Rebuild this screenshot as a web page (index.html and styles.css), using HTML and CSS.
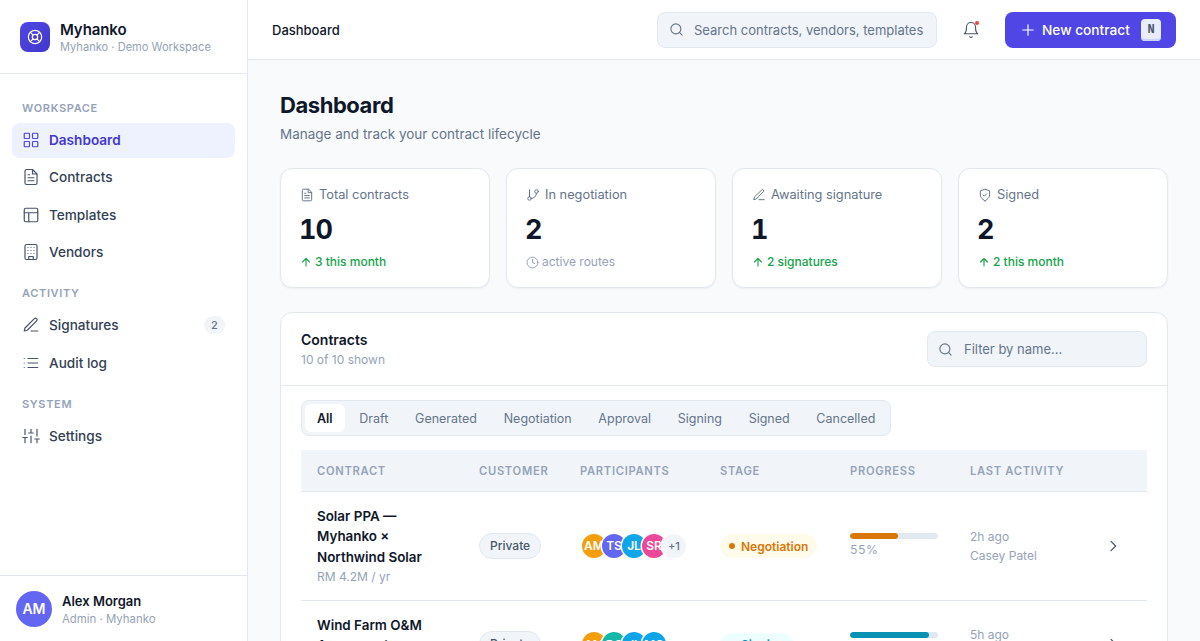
FILE: index.html
```html
<!DOCTYPE html>
<html lang="en">
<head>
<meta charset="utf-8">
<title>Myhanko Dashboard</title>
<link rel="stylesheet" href="styles.css">
</head>
<body>
<div class="app">
  <aside class="sidebar">
    <div class="brand">
      <div class="logo">
        <svg viewBox="0 0 24 24" width="16" height="16" fill="none" stroke="#fff" stroke-width="1.8"><circle cx="12" cy="12" r="10"/><circle cx="12" cy="12" r="4"/><path d="M4.9 4.9l4.3 4.3M19.1 4.9l-4.3 4.3M4.9 19.1l4.3-4.3M19.1 19.1l-4.3-4.3"/></svg>
      </div>
      <div>
        <div class="brand-name">Myhanko</div>
        <div class="brand-sub">Myhanko · Demo Workspace</div>
      </div>
    </div>
    <nav class="nav">
      <div class="nav-label">WORKSPACE</div>
      <a class="nav-item active">
        <svg class="nav-icon" viewBox="0 0 24 24"><rect x="3" y="3" width="7" height="7" rx="1"/><rect x="14" y="3" width="7" height="7" rx="1"/><rect x="3" y="14" width="7" height="7" rx="1"/><rect x="14" y="14" width="7" height="7" rx="1"/></svg>
        Dashboard</a>
      <a class="nav-item">
        <svg class="nav-icon" viewBox="0 0 24 24"><path d="M14 2H6a2 2 0 0 0-2 2v16a2 2 0 0 0 2 2h12a2 2 0 0 0 2-2V8z"/><path d="M14 2v6h6M8 13h8M8 17h8M8 9h2"/></svg>
        Contracts</a>
      <a class="nav-item">
        <svg class="nav-icon" viewBox="0 0 24 24"><rect x="3" y="3" width="18" height="18" rx="2"/><path d="M3 9h18M9 9v12"/></svg>
        Templates</a>
      <a class="nav-item">
        <svg class="nav-icon" viewBox="0 0 24 24"><rect x="4" y="2" width="16" height="20" rx="2"/><path d="M9 22v-4h6v4M8 6h.01M12 6h.01M16 6h.01M8 10h.01M12 10h.01M16 10h.01M8 14h.01M12 14h.01M16 14h.01"/></svg>
        Vendors</a>
      <div class="nav-label second">ACTIVITY</div>
      <a class="nav-item">
        <svg class="nav-icon" viewBox="0 0 24 24"><path d="M12 20h9"/><path d="M16.5 3.5a2.1 2.1 0 0 1 3 3L7 19l-4 1 1-4z"/></svg>
        Signatures<span class="nav-badge">2</span></a>
      <a class="nav-item">
        <svg class="nav-icon" viewBox="0 0 24 24"><path d="M8 6h13M8 12h13M8 18h13M3 6h.01M3 12h.01M3 18h.01"/></svg>
        Audit log</a>
      <div class="nav-label second">SYSTEM</div>
      <a class="nav-item">
        <svg class="nav-icon" viewBox="0 0 24 24"><path d="M4 21v-7M4 10V3M12 21v-9M12 8V3M20 21v-5M20 12V3M1 14h6M9 8h6M17 16h6"/></svg>
        Settings</a>
    </nav>
    <div class="user">
      <div class="user-avatar">AM</div>
      <div>
        <div class="user-name">Alex Morgan</div>
        <div class="user-sub">Admin · Myhanko</div>
      </div>
    </div>
  </aside>
  <div class="main">
    <header class="topbar">
      <div class="crumb">Dashboard</div>
      <div class="search">
        <svg class="search-icon" viewBox="0 0 24 24"><circle cx="11" cy="11" r="8"/><path d="M21 21l-4.3-4.3"/></svg>
        <span>Search contracts, vendors, templates</span>
      </div>
      <div class="bell">
        <svg viewBox="0 0 24 24" width="18" height="18" fill="none" stroke="#475569" stroke-width="1.5" stroke-linecap="round" stroke-linejoin="round"><path d="M6 8a6 6 0 0 1 12 0c0 7 3 9 3 9H3s3-2 3-9"/><path d="M10.3 21a2 2 0 0 0 3.4 0"/></svg>
        <span class="bell-dot"></span>
      </div>
      <button class="new-btn">
        <svg viewBox="0 0 24 24" width="14" height="14" fill="none" stroke="#fff" stroke-width="2" stroke-linecap="round"><path d="M12 3v18M3 12h18"/></svg>
        New contract
        <kbd class="kbd">N</kbd>
      </button>
    </header>
    <main class="content">
      <h1 class="title">Dashboard</h1>
      <p class="subtitle">Manage and track your contract lifecycle</p>
      <section class="stats">
        <div class="stat">
          <div class="stat-label"><svg class="stat-icon" viewBox="0 0 24 24"><path d="M14 2H6a2 2 0 0 0-2 2v16a2 2 0 0 0 2 2h12a2 2 0 0 0 2-2V8z"/><path d="M14 2v6h6M8 13h8M8 17h8M8 9h2"/></svg>Total contracts</div>
          <div class="stat-value">10</div>
          <div class="stat-note up"><svg class="note-icon" viewBox="0 0 24 24"><path d="M12 20V5M5 12l7-7 7 7"/></svg>3 this month</div>
        </div>
        <div class="stat">
          <div class="stat-label"><svg class="stat-icon" viewBox="0 0 24 24"><circle cx="6" cy="18" r="3"/><circle cx="18" cy="6" r="3"/><path d="M6 3v12M18 9a9 9 0 0 1-9 9"/></svg>In negotiation</div>
          <div class="stat-value">2</div>
          <div class="stat-note muted"><svg class="note-icon clock" viewBox="0 0 24 24"><circle cx="12" cy="12" r="10"/><path d="M12 6v6l4 2"/></svg>active routes</div>
        </div>
        <div class="stat">
          <div class="stat-label"><svg class="stat-icon" viewBox="0 0 24 24"><path d="M12 20h9"/><path d="M16.5 3.5a2.1 2.1 0 0 1 3 3L7 19l-4 1 1-4z"/></svg>Awaiting signature</div>
          <div class="stat-value">1</div>
          <div class="stat-note up"><svg class="note-icon" viewBox="0 0 24 24"><path d="M12 20V5M5 12l7-7 7 7"/></svg>2 signatures</div>
        </div>
        <div class="stat">
          <div class="stat-label"><svg class="stat-icon" viewBox="0 0 24 24"><path d="M12 22s8-4 8-10V5l-8-3-8 3v7c0 6 8 10 8 10z"/><path d="M9 12l2 2 4-4"/></svg>Signed</div>
          <div class="stat-value">2</div>
          <div class="stat-note up"><svg class="note-icon" viewBox="0 0 24 24"><path d="M12 20V5M5 12l7-7 7 7"/></svg>2 this month</div>
        </div>
      </section>
      <section class="panel">
        <div class="panel-head">
          <div>
            <div class="panel-title">Contracts</div>
            <div class="panel-sub">10 of 10 shown</div>
          </div>
          <div class="filter">
            <svg class="search-icon" viewBox="0 0 24 24"><circle cx="11" cy="11" r="8"/><path d="M21 21l-4.3-4.3"/></svg>
            <span>Filter by name...</span>
          </div>
        </div>
        <div class="panel-body">
          <div class="tabs">
            <span class="tab on">All</span><span class="tab">Draft</span><span class="tab">Generated</span><span class="tab">Negotiation</span><span class="tab">Approval</span><span class="tab">Signing</span><span class="tab">Signed</span><span class="tab">Cancelled</span>
          </div>
          <div class="thead row-grid">
            <div>CONTRACT</div><div>CUSTOMER</div><div>PARTICIPANTS</div><div>STAGE</div><div>PROGRESS</div><div>LAST ACTIVITY</div><div></div>
          </div>
          <div class="row row-grid">
            <div>
              <div class="c-name">Solar PPA — Myhanko × Northwind Solar</div>
              <div class="c-sub">RM 4.2M / yr</div>
            </div>
            <div><span class="cust">Private</span></div>
            <div class="avatars">
              <span class="av amber">AM</span><span class="av indigo">TS</span><span class="av sky">JL</span><span class="av pink">SR</span><span class="av more">+1</span>
            </div>
            <div><span class="stage neg"><i class="dot"></i>Negotiation</span></div>
            <div>
              <div class="bar"><div class="fill fill-neg" style="width:55%"></div></div>
              <div class="pct">55%</div>
            </div>
            <div class="activity"><div>2h ago</div><div>Casey Patel</div></div>
            <div class="chev"><svg viewBox="0 0 24 24" width="16" height="16" fill="none" stroke="#475569" stroke-width="1.8" stroke-linecap="round" stroke-linejoin="round"><path d="M9 5l7 7-7 7"/></svg></div>
          </div>
          <div class="row row-grid">
            <div>
              <div class="c-name">Wind Farm O&amp;M Agreement</div>
              <div class="c-sub">RM 1.8M / yr</div>
            </div>
            <div><span class="cust">Private</span></div>
            <div class="avatars">
              <span class="av amber">AM</span><span class="av teal">DS</span><span class="av sky">JL</span><span class="av sky">MG</span>
            </div>
            <div><span class="stage sign"><i class="dot"></i>Signing</span></div>
            <div>
              <div class="bar"><div class="fill fill-sign" style="width:90%"></div></div>
              <div class="pct">90%</div>
            </div>
            <div class="activity"><div>5h ago</div><div>Jamie Lee</div></div>
            <div class="chev"><svg viewBox="0 0 24 24" width="16" height="16" fill="none" stroke="#475569" stroke-width="1.8" stroke-linecap="round" stroke-linejoin="round"><path d="M9 5l7 7-7 7"/></svg></div>
          </div>
        </div>
      </section>
    </main>
  </div>
</div>
</body>
</html>
```
FILE: styles.css
```css
* { box-sizing: border-box; }
html, body { margin: 0; height: 100%; overflow: hidden; }
body { font-family: Inter, "Liberation Sans", sans-serif; color: #0f172a; background: #f8fafc; }
.app { display: flex; height: 641px; overflow: hidden; }

.sidebar { width: 248px; flex: none; background: #fff; border-right: 1px solid #e2e8f0; display: flex; flex-direction: column; }
.brand { height: 74px; padding: 0 20px; display: flex; align-items: center; gap: 10px; border-bottom: 1px solid #e2e8f0; }
.logo { width: 30px; height: 30px; border-radius: 8px; background: linear-gradient(135deg, #4f46e5, #4338ca); display: flex; align-items: center; justify-content: center; }
.brand-name { font-size: 15px; font-weight: 600; line-height: 21px; letter-spacing: -0.1px; }
.brand-sub { font-size: 11.1px; line-height: 14px; color: #94a3b8; }

.nav { flex: 1; padding: 0 12px; }
.nav-label { font-size: 11px; font-weight: 600; letter-spacing: 0.66px; color: #94a3b8; padding-left: 10px; margin-top: 27px; line-height: 14px; margin-bottom: 7.5px; }
.nav-label.second { margin-top: 16.5px; }
.nav-item { display: flex; align-items: center; gap: 9px; height: 35.33px; margin-bottom: 2px; padding: 0 10px; border-radius: 8px; font-size: 13.6px; font-weight: 500; color: #334155; }
.nav-item.active { background: #eef2ff; color: #4338ca; font-weight: 600; }
.nav-icon { width: 18px; height: 18px; flex: none; fill: none; stroke: #475569; stroke-width: 1.6; stroke-linecap: round; stroke-linejoin: round; }
.nav-item.active .nav-icon { stroke: #4f46e5; }
.nav-badge { margin-left: auto; width: 21px; height: 18px; border-radius: 9px; background: #f1f5f9; color: #64748b; font-size: 11px; display: flex; align-items: center; justify-content: center; }

.user { height: 66px; border-top: 1px solid #e2e8f0; padding: 0 16px; display: flex; align-items: center; gap: 10px; }
.user-avatar { width: 36px; height: 36px; border-radius: 50%; background: #6366f1; color: #fff; font-size: 14px; font-weight: 600; display: flex; align-items: center; justify-content: center; }
.user-name { font-size: 13px; font-weight: 600; line-height: 18px; }
.user-sub { font-size: 11.4px; color: #94a3b8; line-height: 14px; margin-top: 2px; }

.main { flex: 1; min-width: 0; display: flex; flex-direction: column; }
.topbar { height: 60px; flex: none; background: #fff; border-bottom: 1px solid #e2e8f0; display: flex; align-items: center; padding: 0 24px; }
.crumb { font-size: 13px; font-weight: 500; color: #0f172a; margin-right: auto; }
.search { width: 280px; height: 36px; background: #f1f5f9; border: 1px solid #e2e8f0; border-radius: 8px; display: flex; align-items: center; gap: 10px; padding: 0 11px; font-size: 13px; color: #64748b; white-space: nowrap; }
.search-icon { width: 15px; height: 15px; flex: none; fill: none; stroke: #64748b; stroke-width: 1.8; stroke-linecap: round; }
.bell { position: relative; margin: 0 25px 0 25px; width: 18px; height: 18px; }
.bell svg { display: block; }
.bell-dot { position: absolute; top: 0; right: 1px; width: 4px; height: 4px; border-radius: 50%; background: #ef4444; }
.new-btn { height: 36px; width: 171px; border: 0; border-radius: 8px; background: #4f46e5; color: #fff; font: 500 13.7px Inter, sans-serif; display: flex; align-items: center; padding: 0 15px 0 16px; gap: 7px; white-space: nowrap; }
.kbd { margin-left: auto; width: 20px; height: 22px; border-radius: 4px; background: #e8ecfb; color: #475569; font: 700 12px "Liberation Mono", monospace; display: flex; align-items: center; justify-content: center; box-shadow: inset 0 -2px 0 #c7d2fe; }

.content { padding: 31px 32px 0; flex: 1; min-height: 0; }
.title { margin: 0; font-size: 22px; font-weight: 700; line-height: 28px; letter-spacing: -0.44px; }
.subtitle { margin: 5px 0 0; font-size: 13.5px; line-height: 20px; color: #64748b; }

.stats { display: grid; grid-template-columns: repeat(4, 1fr); gap: 16px; margin-top: 24px; }
.stat { height: 120px; background: #fff; border: 1px solid #e2e8f0; border-radius: 12px; padding: 18px 19px; box-shadow: 0 1px 2px rgba(15,23,42,.05); }
.stat-label { display: flex; align-items: center; gap: 5px; font-size: 12.8px; line-height: 16px; color: #64748b; }
.stat-icon { width: 14px; height: 14px; flex: none; fill: none; stroke: #64748b; stroke-width: 1.7; stroke-linecap: round; stroke-linejoin: round; }
.stat-value { font-size: 27px; font-weight: 700; line-height: 32px; margin: 11px 0 0 -1px; font-variant-numeric: tabular-nums; letter-spacing: -1px; }
.stat-note { display: flex; align-items: center; gap: 3px; font-size: 12px; line-height: 16px; margin-top: 8px; font-weight: 500; }
.stat-note.up { color: #16a34a; }
.stat-note.muted { color: #94a3b8; font-weight: 400; }
.note-icon { width: 12px; height: 12px; flex: none; fill: none; stroke: #16a34a; stroke-width: 2.2; stroke-linecap: round; stroke-linejoin: round; }
.note-icon.clock { stroke: #94a3b8; width: 13px; height: 13px; stroke-width: 1.8; }

.panel { margin-top: 24px; background: #fff; border: 1px solid #e2e8f0; border-radius: 12px; }
.panel-head { height: 73px; display: flex; align-items: center; justify-content: space-between; padding: 0 20px; border-bottom: 1px solid #e2e8f0; }
.panel-title { font-size: 14px; font-weight: 600; line-height: 20px; }
.panel-sub { font-size: 12px; color: #94a3b8; line-height: 16px; margin-top: 2px; }
.filter { width: 220px; height: 36px; background: #f1f5f9; border: 1px solid #e2e8f0; border-radius: 8px; display: flex; align-items: center; gap: 11px; padding: 0 10px; font-size: 13px; color: #64748b; }
.panel-body { padding: 14px 20px 0; }
.tabs { display: inline-flex; gap: 2.7px; height: 36px; padding: 3px; background: #f1f5f9; border: 1px solid #e2e8f0; border-radius: 8px; font-size: 12.5px; color: #64748b; vertical-align: top; }
.tab { padding: 0 12px; display: flex; align-items: center; font-weight: 400; }
.tab.on { background: #fff; color: #0f172a; font-weight: 600; border-radius: 6px; }
.row-grid { display: grid; grid-template-columns: 162px 101px 140px 130px 120px 1fr 36px; align-items: center; padding: 0 16px; }
.thead { margin-top: 14px; height: 42px; background: #f1f5f9; border-bottom: 1px solid #e2e8f0; font-size: 11.2px; font-weight: 600; letter-spacing: 0.7px; color: #94a3b8; }
.row { padding-top: 14px; padding-bottom: 14.5px; border-bottom: 1px solid #e2e8f0; }
.c-name { font-size: 13.4px; font-weight: 600; line-height: 20.4px; width: 125px; }
.c-sub { font-size: 12px; color: #94a3b8; line-height: 16px; margin-top: 2px; }
.cust { display: inline-block; height: 26px; line-height: 24px; padding: 0 10px; border: 1px solid #e2e8f0; border-radius: 13px; background: #f1f5f9; font-size: 12px; font-weight: 500; color: #475569; }
.avatars { display: flex; padding-left: 2px; }
.av { position: relative; width: 24px; height: 24px; border-radius: 50%; margin-right: -4px; color: #fff; font-size: 12px; font-weight: 600; display: flex; align-items: center; justify-content: center; overflow: hidden; white-space: nowrap; box-shadow: 0 0 0 1.5px #fff; }
.amber { background: #f59e0b; }
.indigo { background: #6366f1; }
.sky { background: #0ea5e9; }
.pink { background: #ec4899; }
.teal { background: #14b8a6; }
.more { background: #f1f5f9; color: #64748b; font-size: 11px; font-weight: 500; }
.stage { display: inline-flex; align-items: center; gap: 6px; height: 24px; padding: 0 9px; border-radius: 12px; font-size: 12px; font-weight: 600; }
.dot { width: 6px; height: 6px; border-radius: 50%; background: currentColor; }
.neg { background: #fffbeb; color: #d97706; }
.sign { background: #ecfeff; color: #0891b2; }
.bar { width: 88px; height: 6px; border-radius: 3px; background: #e2e8f0; overflow: hidden; }
.fill { height: 100%; border-radius: 3px; }
.fill-neg { background: #d97706; }
.fill-sign { background: #0891b2; }
.pct { font-size: 12px; color: #94a3b8; margin-top: 3px; line-height: 16px; font-variant-numeric: tabular-nums; letter-spacing: 0.2px; }
.activity { font-size: 12px; color: #94a3b8; line-height: 19.5px; padding-top: 1px; }
.chev { display: flex; justify-content: center; }
```
